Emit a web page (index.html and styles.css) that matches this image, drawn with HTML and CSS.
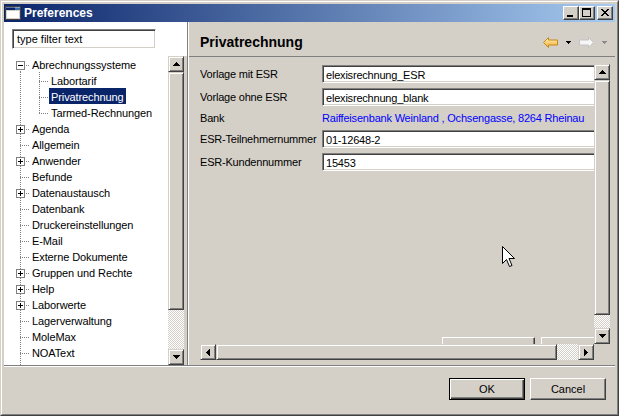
FILE: index.html
```html
<!DOCTYPE html>
<html>
<head>
<meta charset="utf-8">
<link rel="stylesheet" href="styles.css">
</head>
<body>
<div class="window">
  <div class="frame">
    <div class="titlebar">
      <svg class="app-icon" width="16" height="14" viewBox="0 0 16 14">
        <rect x="0.5" y="0.5" width="15" height="13" fill="#d4d0c8" stroke="#404040"/>
        <rect x="1" y="1" width="14" height="3" fill="#0a246a"/>
        <rect x="10" y="1" width="5" height="3" fill="#3a6ea5"/>
        <rect x="2" y="5" width="12" height="7" fill="#ffffff"/>
        <rect x="1" y="1" width="14" height="1" fill="#ffffff" opacity="0.35"/>
      </svg>
      <span class="title">Preferences</span>
      <span class="cbtn"><svg width="14" height="12" viewBox="0 0 14 12"><rect x="3" y="8" width="6" height="2" fill="#000"/></svg></span>
      <span class="cbtn"><svg width="14" height="12" viewBox="0 0 14 12"><rect x="2" y="1" width="9" height="2" fill="#000"/><rect x="2" y="3" width="1" height="7" fill="#000"/><rect x="10" y="3" width="1" height="7" fill="#000"/><rect x="2" y="9" width="9" height="1" fill="#000"/></svg></span>
      <span class="cbtn close"><svg width="14" height="12" viewBox="0 0 14 12"><g transform="translate(3 2)" fill="#000"><rect x="0" y="0" width="2" height="1"/><rect x="6" y="0" width="2" height="1"/><rect x="1" y="1" width="2" height="1"/><rect x="5" y="1" width="2" height="1"/><rect x="2" y="2" width="4" height="1"/><rect x="3" y="3" width="2" height="1"/><rect x="2" y="4" width="4" height="1"/><rect x="1" y="5" width="2" height="1"/><rect x="5" y="5" width="2" height="1"/><rect x="0" y="6" width="2" height="1"/><rect x="6" y="6" width="2" height="1"/></g></svg></span>
    </div>

    <div class="client">
      <div class="main">
        <div class="left">
          <div class="filter-row"><div class="field filter">type filter text</div></div>
          <div class="tree-wrap">
            <div class="tree">
              <div class="row"><span class="g g-first"><span class="box minus"></span></span><span class="label">Abrechnungssysteme</span></div>
              <div class="row"><span class="g g-pipe"></span><span class="g g-tee"></span><span class="label">Labortarif</span></div>
              <div class="row"><span class="g g-pipe"></span><span class="g g-tee"></span><span class="label selected">Privatrechnung</span></div>
              <div class="row"><span class="g g-pipe"></span><span class="g g-elbow"></span><span class="label">Tarmed-Rechnungen</span></div>
              <div class="row"><span class="g g-tee"><span class="box plus"></span></span><span class="label">Agenda</span></div>
              <div class="row"><span class="g g-tee"></span><span class="label">Allgemein</span></div>
              <div class="row"><span class="g g-tee"><span class="box plus"></span></span><span class="label">Anwender</span></div>
              <div class="row"><span class="g g-tee"></span><span class="label">Befunde</span></div>
              <div class="row"><span class="g g-tee"><span class="box plus"></span></span><span class="label">Datenaustausch</span></div>
              <div class="row"><span class="g g-tee"></span><span class="label">Datenbank</span></div>
              <div class="row"><span class="g g-tee"></span><span class="label">Druckereinstellungen</span></div>
              <div class="row"><span class="g g-tee"></span><span class="label">E-Mail</span></div>
              <div class="row"><span class="g g-tee"></span><span class="label">Externe Dokumente</span></div>
              <div class="row"><span class="g g-tee"><span class="box plus"></span></span><span class="label">Gruppen und Rechte</span></div>
              <div class="row"><span class="g g-tee"><span class="box plus"></span></span><span class="label">Help</span></div>
              <div class="row"><span class="g g-tee"><span class="box plus"></span></span><span class="label">Laborwerte</span></div>
              <div class="row"><span class="g g-tee"></span><span class="label">Lagerverwaltung</span></div>
              <div class="row"><span class="g g-tee"></span><span class="label">MoleMax</span></div>
              <div class="row"><span class="g g-tee"></span><span class="label">NOAText</span></div>
              <div class="row"><span class="g g-pipe"></span></div>
            </div>
            <div class="vscroll tree-scroll">
              <span class="sbtn"><svg width="7" height="4" viewBox="0 0 7 4"><path d="M3 0h1v1h1v1h1v1h1v1H0V3h1V2h1V1h1z" fill="#000"/></svg></span>
              <span class="thumb"></span>
              <span class="track"></span>
              <span class="sbtn"><svg width="7" height="4" viewBox="0 0 7 4"><path d="M0 0h7v1H6v1H5v1H4v1H3V3H2V2H1V1H0z" fill="#000"/></svg></span>
            </div>
            <div class="strip"></div>
          </div>
        </div>
        <div class="sash"></div>
        <div class="right">
          <div class="page-header">
            <span class="page-title">Privatrechnung</span>
            <div class="nav">
              <svg width="15" height="11" viewBox="0 0 15 11">
                <defs><linearGradient id="gback" x1="0" y1="0" x2="0" y2="1"><stop offset="0" stop-color="#fff4c0"/><stop offset="1" stop-color="#f2ac2c"/></linearGradient></defs>
                <path d="M0.5 5.5 L5.5 0.5 V3 H14.5 V8 H5.5 V10.5 Z" fill="url(#gback)" stroke="#c8871a"/>
              </svg>
              <svg class="dd" width="5" height="3" viewBox="0 0 5 3"><path d="M0 0h5v1H4v1H3v1H2V2H1V1H0z" fill="#000"/></svg>
              <svg width="15" height="11" viewBox="0 0 15 11">
                <path d="M14.5 5.5 L9.5 0.5 V3 H0.5 V8 H9.5 V10.5 Z" fill="#f6f6f6" stroke="#c4c4c4"/>
              </svg>
              <svg class="dd" width="5" height="3" viewBox="0 0 5 3"><path d="M0 0h5v1H4v1H3v1H2V2H1V1H0z" fill="#8a8a8a"/></svg>
            </div>
          </div>
          <div class="scrolled">
            <div class="viewport-row">
              <div class="viewport">
                <div class="content">
                  <div class="form">
                    <span class="flabel">Vorlage mit ESR</span><div class="field text">elexisrechnung_ESR</div>
                    <span class="flabel">Vorlage ohne ESR</span><div class="field text">elexisrechnung_blank</div>
                    <span class="flabel">Bank</span><span class="link">Raiffeisenbank Weinland , Ochsengasse, 8264 Rheinau</span>
                    <span class="flabel">ESR-Teilnehmernummer</span><div class="field text">01-12648-2</div>
                    <span class="flabel">ESR-Kundennummer</span><div class="field text">15453</div>
                  </div>
                  <div class="content-buttons">
                    <span class="btn restore">Restore Defaults</span>
                    <span class="btn apply">Apply</span>
                  </div>
                </div>
              </div>
              <div class="vscroll page-scroll">
                <span class="sbtn"><svg width="7" height="4" viewBox="0 0 7 4"><path d="M3 0h1v1h1v1h1v1h1v1H0V3h1V2h1V1h1z" fill="#000"/></svg></span>
                <span class="thumb"></span>
                <span class="track"></span>
                <span class="sbtn"><svg width="7" height="4" viewBox="0 0 7 4"><path d="M0 0h7v1H6v1H5v1H4v1H3V3H2V2H1V1H0z" fill="#000"/></svg></span>
              </div>
            </div>
            <div class="hscroll-row">
              <div class="hscroll">
                <span class="sbtn"><svg width="4" height="7" viewBox="0 0 4 7"><path d="M4 0v7H3V6H2V5H1V4H0V3h1V2h1V1h1V0z" fill="#000"/></svg></span>
                <span class="thumb"></span>
                <span class="track"></span>
                <span class="sbtn"><svg width="4" height="7" viewBox="0 0 4 7"><path d="M0 0h1v1h1v1h1v1h1v1H3v1H2v1H1v1H0z" fill="#000"/></svg></span>
              </div>
              <div class="corner"></div>
            </div>
          </div>
        </div>
      </div>
      <div class="separator"></div>
      <div class="button-bar">
        <span class="btn default">OK</span>
        <span class="btn">Cancel</span>
      </div>
    </div>
  </div>
</div>
<svg class="cursor" width="14" height="22" viewBox="0 0 14 22">
  <path d="M0.5 0.5 V17.5 L4.5 13.5 L7.5 20.5 L10 19.5 L7 12.5 H12.5 Z" fill="#fff" stroke="#000"/>
</svg>
</body>
</html>
```

FILE: styles.css
```css
* { box-sizing: border-box; }
html, body { margin: 0; padding: 0; }
body {
  width: 619px;
  height: 416px;
  overflow: hidden;
  position: relative;
  background: #d4d0c8;
  font-family: "Liberation Sans", Arial, sans-serif;
  font-size: 11px;
  color: #000;
  --vdot: repeating-linear-gradient(to bottom, #808080 0 1px, transparent 1px 2px);
  --hdot: repeating-linear-gradient(to right, #808080 0 1px, transparent 1px 2px);
}

.window {
  width: 619px;
  height: 416px;
  border: 1px solid;
  border-color: #d4d0c8 #404040 #404040 #d4d0c8;
}
.frame {
  height: 100%;
  border: 1px solid;
  border-color: #fff #808080 #808080 #fff;
  padding: 2px;
  display: flex;
  flex-direction: column;
}

/* title bar */
.titlebar {
  height: 18px;
  flex: none;
  display: flex;
  align-items: center;
  padding: 0 2px 0 1px;
  background: linear-gradient(to right, #0a246a, #a6caf0);
  color: #fff;
}
.app-icon { flex: none; margin-right: 3px; display: block; }
.title {
  flex: 1;
  font-weight: bold;
  font-size: 12px;
  line-height: 18px;
  white-space: nowrap;
}
.cbtn {
  width: 16px;
  height: 14px;
  flex: none;
  background: #d4d0c8;
  border: 1px solid;
  border-color: #fff #404040 #404040 #fff;
  box-shadow: inset -1px -1px #808080;
}
.cbtn svg { display: block; }
.cbtn.close { margin-left: 2px; }

/* client */
.client { flex: 1; display: flex; flex-direction: column; }
.main { height: 343px; flex: none; display: flex; }

.left {
  width: 183px;
  flex: none;
  background: #fff;
  display: flex;
  flex-direction: column;
}
.filter-row { height: 34px; flex: none; padding: 7px 0 0 8px; }

.field {
  background: #fff;
  border: 1px solid;
  border-color: #808080 #fff #fff #808080;
  box-shadow: inset 1px 1px #404040, inset -1px -1px #d4d0c8;
  padding-left: 4px;
  white-space: nowrap;
  overflow: hidden;
}
.filter {
  width: 144px;
  height: 20px;
  padding-top: 2px;
  line-height: 15px;
}

.tree-wrap { flex: 1; display: flex; min-height: 0; }
.tree { flex: 1; overflow: hidden; padding-left: 7px; background: #fff; }
.row { display: flex; height: 16px; white-space: nowrap; }
.label { height: 16px; line-height: 18px; padding: 0 2px; letter-spacing: -0.1px; }
.label.selected { background: #0a246a; color: #fff; }

.g {
  width: 19px;
  height: 16px;
  flex: none;
  background-repeat: no-repeat;
}
.g-tee {
  background-image: var(--vdot), var(--hdot);
  background-size: 1px 16px, 10px 1px;
  background-position: 9px 0, 9px 9px;
}
.g-first {
  background-image: var(--vdot), var(--hdot);
  background-size: 1px 7px, 10px 1px;
  background-position: 9px 9px, 9px 9px;
}
.g-elbow {
  background-image: var(--vdot), var(--hdot);
  background-size: 1px 10px, 10px 1px;
  background-position: 9px 0, 9px 9px;
}
.g-pipe {
  background-image: var(--vdot);
  background-size: 1px 16px;
  background-position: 9px 0;
}
.box {
  display: block;
  width: 9px;
  height: 9px;
  margin: 5px 0 0 5px;
  border: 1px solid #808080;
  background-color: #fff;
  background-repeat: no-repeat;
}
.box.minus {
  background-image: linear-gradient(#000, #000);
  background-size: 5px 1px;
  background-position: 1px 3px;
}
.box.plus {
  background-image: linear-gradient(#000, #000), linear-gradient(#000, #000);
  background-size: 5px 1px, 1px 5px;
  background-position: 1px 3px, 3px 1px;
}

.strip { width: 3px; flex: none; background: #d4d0c8; }

/* scrollbars */
.vscroll { width: 16px; flex: none; display: flex; flex-direction: column; }
.sbtn, .thumb {
  background: #d4d0c8;
  border: 1px solid;
  border-color: #d4d0c8 #404040 #404040 #d4d0c8;
  box-shadow: inset 1px 1px #fff, inset -1px -1px #808080;
}
.sbtn {
  width: 16px;
  height: 16px;
  flex: none;
  display: flex;
  align-items: center;
  justify-content: center;
}
.sbtn svg { display: block; }
.track {
  flex: 1;
  background: repeating-conic-gradient(#fff 0 25%, #d4d0c8 0 50%) 0 0 / 2px 2px;
}
.tree-scroll .thumb { height: 238px; flex: none; }
.page-scroll .thumb { height: 235px; flex: none; }

.sash {
  width: 2px;
  flex: none;
  border-left: 1px solid #808080;
  background: #fff;
}

/* right page */
.right { flex: 1; display: flex; flex-direction: column; min-width: 0; }
.page-header {
  height: 35px;
  flex: none;
  border-bottom: 1px solid #808080;
  display: flex;
  align-items: flex-start;
  padding: 12px 8px 0 11px;
}
.page-title {
  flex: 1;
  font-weight: bold;
  font-size: 14px;
  line-height: 16px;
  white-space: nowrap;
}
.nav {
  display: flex;
  align-items: center;
  gap: 8px;
  margin-top: 3px;
  height: 11px;
}
.nav svg { display: block; }

.scrolled {
  flex: 1;
  margin: 7px 5px 5px 11px;
  display: flex;
  flex-direction: column;
  min-height: 0;
}
.viewport-row { flex: 1; display: flex; min-height: 0; }
.viewport { flex: 1; overflow: hidden; }
.content {
  width: 417px;
  height: 296px;
  display: flex;
  flex-direction: column;
  padding-top: 1px;
  letter-spacing: -0.2px;
}
.form {
  display: grid;
  grid-template-columns: 122px 1fr;
  grid-template-rows: 18px 18px 14px 18px 18px;
  row-gap: 5px;
  align-items: center;
}
.flabel { line-height: 18px; white-space: nowrap; }
.field.text { height: 18px; line-height: 14px; padding-left: 3px; padding-top: 2px; }
.link { color: #0000ff; white-space: nowrap; line-height: 14px; }

.content-buttons {
  margin-top: auto;
  display: flex;
  justify-content: flex-end;
  gap: 6px;
}
.btn {
  height: 22px;
  width: 76px;
  display: flex;
  align-items: center;
  justify-content: center;
  background: #d4d0c8;
  border: 1px solid;
  border-color: #fff #404040 #404040 #fff;
  box-shadow: inset -1px -1px #808080;
  white-space: nowrap;
  line-height: 20px;
}
.btn.restore { width: 93px; height: 23px; }
.btn.apply { height: 23px; }
.btn.default {
  border-color: #000;
  box-shadow: inset 1px 1px #fff, inset -1px -1px #404040, inset -2px -2px #808080;
}

.hscroll-row { height: 16px; flex: none; display: flex; }
.hscroll { flex: 1; display: flex; }
.hscroll .thumb { width: 341px; flex: none; }
.hscroll .track { flex: 1; }
.corner { width: 16px; flex: none; background: #d4d0c8; }

.separator {
  height: 2px;
  flex: none;
  border-top: 1px solid #808080;
  background: #fff;
}
.button-bar {
  flex: 1;
  display: flex;
  justify-content: flex-end;
  align-items: flex-start;
  gap: 5px;
  padding: 11px 9px 0 0;
}

.cursor {
  position: absolute;
  left: 502px;
  top: 246px;
  display: block;
}
```
